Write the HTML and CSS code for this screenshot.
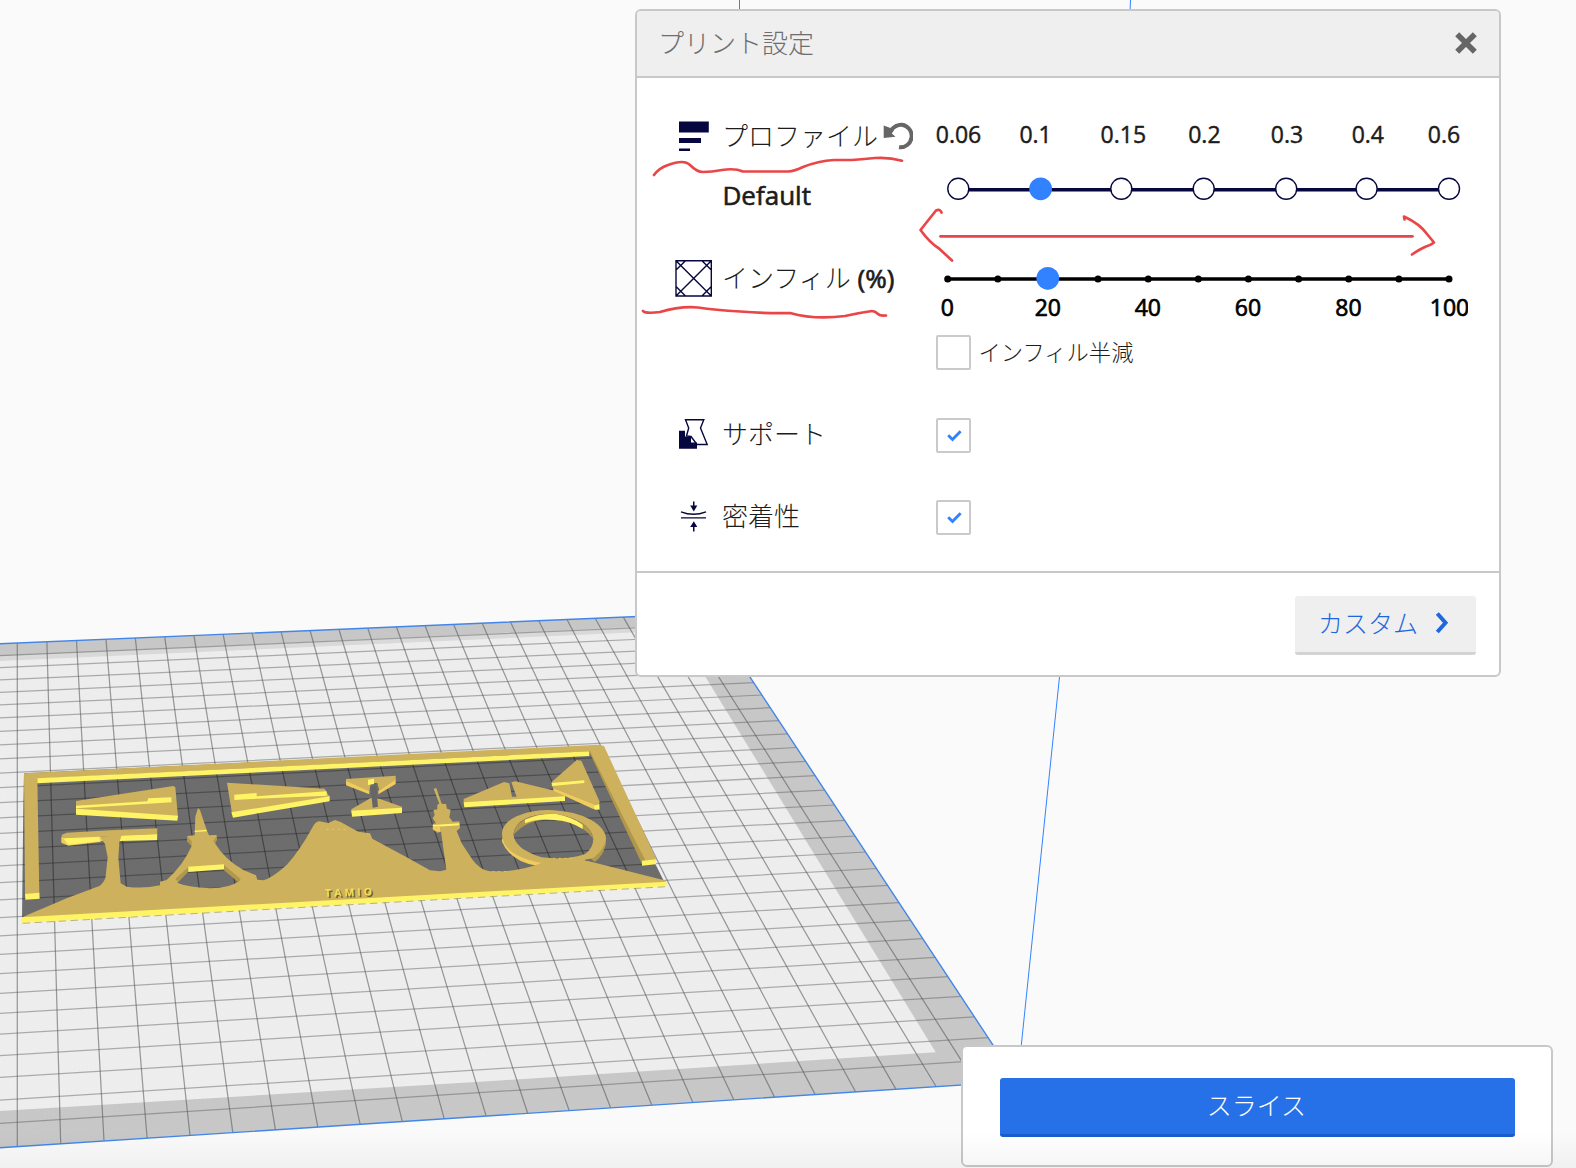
FILE: index.html
```html
<!DOCTYPE html>
<html lang="ja">
<head>
<meta charset="utf-8">
<title>プリント設定</title>
<link rel="stylesheet" href="styles.css">
</head>
<body>
<svg class="scene" viewBox="0 0 1576 1168">
  <g class="volume">
    <path d="M739.5 0V12M1130.5 0L1130 12M1060 672L1021 1048"/>
  </g>
  <path class="bed-edge-zone" d="M0 643.8L708 613.5L1017 1081.4L0 1147.8Z"/>
  <path class="bed-fade" d="M0 656L674 625L684 642L706 677L0 661Z"/>
  <path class="bed" d="M0 661L677 630.5L935.7 1052.3L500 1080.5L0 1111Z"/>
  <g id="fine-grid"></g>
  <g id="grid"></g>
  <path class="bed-outline" d="M0 643.8L708 613.5L1017 1081.4L0 1147.8"/>
  <g transform="translate(0 730) scale(.33333)">
    <path class="model-shadow" d="M72 130L1790 48L1990 450L2000 462L66 566L70 225Z"/>
    <!-- frame -->
    <path class="side" d="M1768 66L1780 66L1936 392L1926 402Z"/>
    <path class="top" d="M72 130L1798 44L1812 48L1970 390L1936 392L1770 64L112 146L118 492L75 494Z"/>
    <path class="lit" d="M112 145L1768 64V78L112 160ZM75 492L118 488L119 506L76 509ZM1926 392L1968 388V403L1926 407Z"/>
    <!-- left wings -->
    <path class="top" d="M228 213L520 168L526 172L534 262L518 268L228 245Z"/>
    <path class="lit" d="M228 227L442 214L445 205L514 202L515 217L445 221L228 235ZM228 236L534 257L532 272L228 254Z"/>
    <path class="top" d="M681 158L974 176L982 190L989 200L696 250Z"/>
    <path class="lit" d="M703 194L770 189V199L980 184V197L770 206L703 210ZM694 247L989 199V214L699 263Z"/>
    <!-- small spool -->
    <path class="warm" d="M1038 150L1108 182V193L1038 166ZM1135 182L1187 147V162L1135 193Z"/>
    <path class="top" d="M1038 147L1187 137V149L1138 181L1132 160L1112 160L1108 184L1038 153ZM1054 238L1112 204L1138 206L1206 230V242L1054 246Z"/>
    <path class="floor" d="M1112 172L1128 166L1134 230L1118 233Z"/>
    <path class="lit" d="M1104 149L1122 146V162L1104 165ZM1054 242L1206 233V249L1056 260Z"/>
    <!-- right wings -->
    <path class="top" d="M1391 207L1512 156L1528 160L1536 200L1550 200L1534 157L1546 154L1695 190V206L1391 218Z"/>
    <path class="lit" d="M1391 217L1695 199V213L1393 232Z"/>
    <path class="warm" d="M1660 173L1798 228V239L1778 236L1660 182Z"/>
    <path class="top" d="M1655 156L1730 90L1744 92L1799 215L1795 229L1660 174L1655 166Z"/>
    <path class="lit" d="M1655 159L1753 151V159L1657 168ZM1782 228L1798 222V238L1784 239Z"/>
    <!-- tree crossbar -->
    <path class="warm" d="M184 320L300 318L312 330L300 336L205 347L184 338Z"/>
    <path class="lit" d="M190 325L298 318L300 334L205 344ZM360 316L472 311V330L360 333Z"/>
    <path class="top" d="M184 315L200 308L330 301L472 295V313L345 318L300 320L190 325Z"/>
    <!-- ring -->
    <path class="warm" d="M1506 325V335Q1530 393 1610 407L1640 396Z"/>
    <path class="side" d="M1817 325V346Q1808 380 1784 396L1765 380Z"/>
    <path class="top" fill-rule="evenodd" d="M1506 312A150 75 4 0 1 1818 326Q1818 352 1780 384L1700 402L1620 398Q1506 374 1506 312ZM1540 312Q1544 358 1625 382Q1700 392 1755 372Q1780 356 1780 325Q1770 270 1665 251Q1550 250 1540 312Z"/>
    <path class="side" d="M1540 315Q1550 250 1665 251Q1770 270 1780 328Q1750 280 1665 270Q1585 262 1540 315Z"/>
    <path class="lit" d="M1575 269Q1615 250 1665 251Q1720 262 1748 284V297Q1710 272 1665 270Q1610 264 1575 280Z"/>
    <!-- skyline -->
    <path class="top" fill-rule="evenodd" d="M66 562L200 505L300 467Q318 452 318 430L323 382L315 342L300 320L365 314L358 338L355 385L362 460L380 470Q430 477 480 466V455L500 450Q550 405 575 348L562 334V318L584 316L586 260L594 234L600 240L620 300L627 316L650 315V330L645 340Q675 390 730 420L768 436L772 449L790 451Q815 445 860 405Q900 360 935 296Q945 275 958 274L985 279L1005 270L1022 276L1075 305L1110 310L1117 326L1220 382L1290 421L1320 424L1339 419L1323 305L1312 308L1298 298V282L1308 280L1298 265L1304 255L1300 240L1312 238V224L1318 221L1301 176L1309 174L1325 221L1338 222L1341 236L1352 239L1348 262L1358 275L1378 274L1380 294L1370 303L1385 340L1418 390Q1440 420 1470 424H1510Q1570 420 1625 399L1680 385H1730L1785 398L1990 450L2000 456L1990 462L66 565ZM532 458L565 422L672 418L719 452Q690 474 630 475Q560 471 532 458Z"/>
    <path class="side" d="M526 447L565 411V425L535 456ZM672 405L722 447L714 456L672 421ZM562 319L575 333V348L562 334ZM650 318L640 334L645 340L650 330Z"/>
    <path class="lit" d="M565 410L672 403V418L565 426ZM584 302L620 299V304L584 306ZM1298 285L1378 280V286L1300 291Z"/>
    <path class="warm" d="M1299 289L1320 288V306L1300 300Z"/>
    <path class="lit" d="M64 562L2000 455V469L66 579Z"/>
    <path class="lit-dots" d="M980 298H1040M1478 425H1520M1660 385H1720"/>
    <path class="model-foot" d="M68 580L2000 470"/>
  </g>
  <g class="plate-name" transform="rotate(-2 350 893)">
    <text class="plate-name-shade" x="326.5" y="897.5" textLength="47">TAMIO</text>
    <text x="325" y="896" textLength="47">TAMIO</text>
  </g>
</svg>

<section class="panel">
  <header class="panel-header">
    <h1>プリント設定</h1>
    <svg class="close" viewBox="0 0 22 22"><path d="M2.2 2.2L19.8 19.8M19.8 2.2L2.2 19.8"/></svg>
  </header>
  <div class="settings">
    <div class="row row-profile">
      <svg class="icon" viewBox="675 115 40 40"><path class="navy" d="M679 121.5H708.8V132.5H679ZM679 138H701V143H679ZM679 148.5H690V151H679Z"/></svg>
      <div class="name">
        <div class="name-line"><span>プロファイル</span>
          <svg class="undo" viewBox="885 122 30 30"><path class="undo-arc" d="M893 131Q898 125.3 904 125.7A10.8 11 0 0 1 901 148.2"/><path class="undo-head" d="M885.7 126.5V139L897.5 137.8L893.8 134.5L896.5 130.5Z"/></svg>
        </div>
        <div class="value">Default</div>
      </div>
      <svg class="slider" width="536" height="130" viewBox="932 98 536 130">
        <g class="layer-labels">
          <text x="958.5" y="142.8">0.06</text><text x="1035.6" y="142.8">0.1</text><text x="1123.3" y="142.8">0.15</text><text x="1204.4" y="142.8">0.2</text><text x="1287" y="142.8">0.3</text><text x="1367.8" y="142.8">0.4</text><text x="1444" y="142.8">0.6</text>
        </g>
        <path class="layer-track" d="M958 189.8H1449"/>
        <g class="layer-stops">
          <circle cx="958.3" cy="188.8" r="10.5"/><circle cx="1121.3" cy="188.8" r="10.5"/><circle cx="1203.7" cy="188.8" r="10.5"/><circle cx="1286.2" cy="188.8" r="10.5"/><circle cx="1366.6" cy="188.8" r="10.5"/><circle cx="1449" cy="188.8" r="10.5"/>
        </g>
        <circle class="handle" cx="1040.6" cy="188.8" r="11.4"/>
      </svg>
    </div>
    <div class="row row-infill">
      <svg class="icon" viewBox="675 258 40 40"><path class="navy-line" d="M676 260.7H711.3V296H676ZM676 260.7L711.3 296M711.3 260.7L676 296M676 270L685.5 260.7M702 260.7L711.3 270M676 286.5L685.5 296M711.3 286.5L702 296"/></svg>
      <div class="name-line"><span>インフィル <b>(%)</b></span></div>
      <div class="infill-control">
        <svg class="slider" width="536" height="103" viewBox="932 228 536 103">
          <path class="infill-track" d="M947.7 279H1449"/>
          <path class="infill-ticks" d="M947.7 279h0M997.8 279h0M1098 279h0M1148.2 279h0M1198.3 279h0M1248.4 279h0M1298.6 279h0M1348.7 279h0M1398.9 279h0M1449 279h0"/>
          <circle class="handle" cx="1047.8" cy="278.3" r="11.4"/>
          <g class="infill-labels">
            <text x="947.3" y="315.6">0</text><text x="1047.8" y="315.6">20</text><text x="1147.8" y="315.6">40</text><text x="1247.9" y="315.6">60</text><text x="1348.5" y="315.6">80</text><text x="1449.5" y="315.6">100</text>
          </g>
        </svg>
        <label class="check-line"><span class="check"></span>インフィル半減</label>
      </div>
    </div>
    <div class="row row-toggle">
      <svg class="icon" viewBox="675 415 40 40"><path class="navy-line" d="M685.5 419.7H703.8L700.5 428L707.2 444.5H697L691 436.5L686.5 436L688.7 428Z"/><path class="navy" d="M679 430.8H685V436.5H691V442.5H697V448.8H679Z"/></svg>
      <div class="name-line"><span>サポート</span></div>
      <span class="check"><svg viewBox="0 0 34 34"><path d="M11.2 17.3L15.5 21.5L23.6 13.2"/></svg></span>
    </div>
    <div class="row row-toggle">
      <svg class="icon" viewBox="675 497 40 40"><path class="navy-line" d="M681 517.9H706M681 511.8Q693.5 516.8 706 511.8"/><path class="navy" d="M693 501.5H694.5V505.5H697.3L693.8 511.5L690.2 505.5H693ZM693 531.5H694.5V527H697.3L693.8 521.2L690.2 527H693Z"/></svg>
      <div class="name-line"><span>密着性</span></div>
      <span class="check"><svg viewBox="0 0 34 34"><path d="M11.2 17.3L15.5 21.5L23.6 13.2"/></svg></span>
    </div>
  </div>
  <footer class="panel-footer">
    <button class="custom">カスタム<svg viewBox="0 0 14 24"><path d="M2.3 2.5L10.5 11.8L2.3 21"/></svg></button>
  </footer>
</section>

<section class="action-card">
  <button class="slice">スライス</button>
</section>
<div class="bottom-haze"></div>

<svg class="notes" viewBox="0 0 1576 1168">
  <path d="M654 175Q659 168 668 165Q684 159 690 165Q697 172 703 172Q712 172 722 170Q735 168 743 171.5H788Q795 171 803 167Q818 161 834 160H852Q865 159 875 158Q889 157 902 160.7"/>
  <path d="M643 311Q646 314 660 312Q680 306 698 307.5Q715 310 740 311.5Q765 313.5 790 313Q815 320 845 316Q858 313 872 311Q875 311 878 314Q880 316 886 315.5"/>
  <path d="M941.5 212.5Q940 208.5 936 210.5L920.5 230Q930 243 939 248.5L952 260.5"/>
  <path d="M940.5 236.3H1412.5"/>
  <path d="M1404.5 219.5L1404 216.5Q1420 224 1427 234L1434 242.5Q1431 245 1426 246.5Q1420 249 1412 254.5"/>
</svg>
<script src="grid.js"></script>
</body>
</html>
```
FILE: styles.css
```css
* { box-sizing: border-box; }
body {
  margin: 0;
  width: 1576px;
  height: 1168px;
  position: relative;
  overflow: hidden;
  background: #fafafa;
  font-family: "Open Sans", "Noto Sans CJK JP", sans-serif;
  color: #1c1c1c;
}
.scene, .notes { position: absolute; left: 0; top: 0; width: 1576px; height: 1168px; }
.notes { pointer-events: none; fill: none; stroke: #ea4648; stroke-width: 2.7; stroke-linecap: round; stroke-linejoin: round; }

.volume { fill: none; stroke: #3282ff; stroke-width: 1; }
.bed-edge-zone { fill: #c8c8c8; }
.bed-fade { fill: #dadada; }
.bed { fill: #eeeeee; }
.bed-outline { fill: none; stroke: #4386e8; stroke-width: 1.4; }
#fine-grid { fill: none; stroke: #000; stroke-opacity: .02; stroke-width: .6; }
#grid { fill: none; stroke: #57595c; stroke-width: 1.25; }
#grid .across { stroke-opacity: .45; }
#grid .along { stroke-opacity: .58; }
.model-shadow { fill: #000; fill-opacity: .54; }
.top { fill: #cdb15d; }
.lit { fill: #fff465; }
.warm { fill: #f0cc5c; }
.side { fill: #b0974b; }
.floor { fill: #666; }
.lit-dots { fill: none; stroke: #ecd75b; stroke-width: 2.5; stroke-dasharray: 5 12; }
.model-foot { fill: none; stroke: #99954a; stroke-width: 2; stroke-dasharray: 22 14; }
.plate-name { font-size: 10.5px; font-weight: 700; fill: #f5dc59; }
.plate-name-shade { fill: #6d602e; }

.panel {
  position: absolute;
  left: 635px;
  top: 9px;
  width: 866px;
  height: 668px;
  border: 2px solid #c8c8c8;
  border-radius: 6px;
  background: #fff;
  display: flex;
  flex-direction: column;
  overflow: hidden;
}
.panel-header {
  height: 67px;
  flex: none;
  background: #efefef;
  border-bottom: 2px solid #c8c8c8;
  padding: 0 22px 2px 21px;
  display: flex;
  align-items: center;
  justify-content: space-between;
}
.panel-header h1 { margin: 0; font-size: 26px; line-height: 40px; font-weight: 300; color: #6e6e6e; }
.close { width: 22px; height: 22px; fill: none; stroke: #666; stroke-width: 5.6; }

.settings { flex: 1; padding: 20px 29px 0 38px; }
.row { display: grid; grid-template-columns: 47px 210px 1fr; }
.icon { width: 40px; height: 40px; }
.navy { fill: #07073f; }
.navy-line { fill: none; stroke: #07073f; stroke-width: 1.4; }
.name-line { display: flex; align-items: center; font-size: 26px; font-weight: 300; line-height: 40px; white-space: pre; }
.name-line b { font-weight: 400; -webkit-text-stroke: .7px; }
.row-profile { height: 130px; }
.row-profile .icon { margin-top: 17px; }
.row-profile .name-line { height: 74px; padding-top: 1px; }
.undo { width: 30px; height: 30px; margin-left: 5px; }
.undo-arc { fill: none; stroke: #666; stroke-width: 4; }
.undo-head { fill: #666; }
.value { font-size: 26px; line-height: 46px; -webkit-text-stroke: .6px; padding-left: .5px; }
.slider { display: block; }
.slider text { text-anchor: middle; font-size: 23px; }
.layer-labels { fill: #1c1c1c; stroke: #1c1c1c; stroke-width: .45px; }
.layer-track { stroke: #07073f; stroke-width: 3.6; }
.layer-stops { fill: #fff; stroke: #07073f; stroke-width: 1.4; }
.handle { fill: #3282ff; }
.row-infill { height: 166px; }
.row-infill .icon { margin-top: 30px; }
.row-infill .name-line { height: 100px; }
.infill-track { stroke: #000; stroke-width: 3.4; }
.infill-ticks { stroke: #000; stroke-width: 7; stroke-linecap: round; }
.infill-labels { fill: #000; stroke: #000; stroke-width: .7px; }
.check-line { display: flex; align-items: center; gap: 7.5px; padding: 4px 0 0 4px; font-size: 22.3px; font-weight: 300; line-height: 34px; }
.check { display: block; flex: none; width: 35px; height: 35px; border: 2px solid #cacaca; border-radius: 2px; background: #fff; }
.check svg { display: block; width: 34px; height: 34px; margin: -1.5px; fill: none; stroke: #3282ff; stroke-width: 2.9; }
.row-toggle { height: 82px; align-items: center; }
.row-toggle .name-line { padding-bottom: 3px; }
.row-toggle .check { margin-left: 4px; }

.panel-footer { height: 104px; flex: none; border-top: 2px solid #c8c8c8; padding: 23px 23px 0; display: flex; justify-content: flex-end; align-items: flex-start; }
button { font-family: inherit; border: 0; padding: 0; }
.custom {
  width: 181px;
  height: 59px;
  border-bottom: 3px solid #d3d3d3;
  border-radius: 3px;
  background: #efefef;
  color: #1f66dd;
  font-size: 25px;
  font-weight: 300;
  line-height: 40px;
  display: flex;
  align-items: center;
  padding: 0 27px 2px 23px;
  justify-content: space-between;
}
.custom svg { width: 14px; height: 24px; fill: none; stroke: #2066dd; stroke-width: 4; }

.action-card {
  position: absolute;
  left: 961px;
  top: 1045px;
  width: 592px;
  height: 122px;
  border: 2px solid #c8c8c8;
  border-radius: 6px;
  background: #fff;
  padding: 31px 36px 31px 37px;
}
.slice {
  display: block;
  width: 100%;
  height: 59px;
  border-bottom: 3px solid #1b5ccc;
  border-radius: 3px;
  background: #2671e7;
  color: #fff;
  font-size: 25px;
  font-weight: 300;
  line-height: 50px;
  padding: 0 2px 3px 0;
}
.bottom-haze { position: absolute; left: 0; right: 0; bottom: 0; height: 36px; background: linear-gradient(rgba(0,0,0,0), rgba(0,0,0,.04)); pointer-events: none; }
```
FILE: grid.js
```js
// Build plate grid: 10 mm lines plus faint 1 mm subdivisions, in perspective.
const COLS = 24, ROWS = 30;
const topEdge = i => {
  const x = 17.3 + 29.67 * i / (1 + 0.00134 * i);
  return [x, 643 - (x - 17.3) * 0.0428];
};
const bottomEdge = i => {
  const x = 17.3 + 43.5 * i / (1 + 0.00189 * i);
  return [x, 1146.5 - (x - 17.3) * 0.0653];
};
const leftY = j => 1146.2 - 24.3 * j / (1 + 0.01498 * j);
const rightY = j => 1081.4 - 22.5 * j / (1 + 0.01475 * j);
const rightX = y => 750 + (y - 676.7) * 0.6597;

function line([x1, y1], [x2, y2]) {
  return `M${x1.toFixed(1)} ${y1.toFixed(1)}L${x2.toFixed(1)} ${y2.toFixed(1)}`;
}
function along(i) { return line(topEdge(i), bottomEdge(i)); }
function across(j) {
  const yl = leftY(j), yr = rightY(j), xr = rightX(yr);
  const y0 = yl - (yr - yl) / (xr - 17.3) * 17.3;
  return line([0, y0], [xr, yr]);
}
function add(parent, d, cls) {
  const p = document.createElementNS("http://www.w3.org/2000/svg", "path");
  p.setAttribute("d", d);
  if (cls) p.setAttribute("class", cls);
  document.getElementById(parent).appendChild(p);
}
let major = "", fine = "";
for (let i = 0; i < COLS; i++) major += along(i);
add("grid", major, "along");
major = "";
for (let j = 1; j < ROWS; j++) major += across(j);
add("grid", major, "across");
for (let i = -3; i < COLS * 10; i++) fine += along(i / 10);
for (let j = 1; j < ROWS * 10; j++) fine += across(j / 10);
add("fine-grid", fine);
```
